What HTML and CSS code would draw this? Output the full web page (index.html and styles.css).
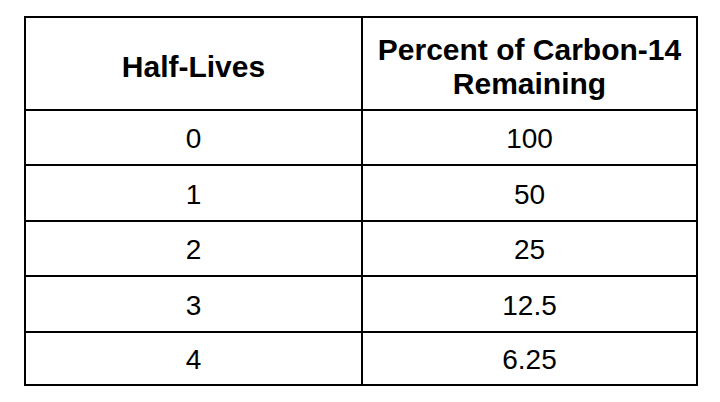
FILE: index.html
```html
<!DOCTYPE html>
<html>
<head>
<meta charset="utf-8">
<link rel="stylesheet" href="styles.css">
</head>
<body>
<table class="decay">
  <thead>
    <tr>
      <th class="col-a">Half-Lives</th>
      <th class="col-b">Percent of Carbon-14<br>Remaining</th>
    </tr>
  </thead>
  <tbody>
    <tr class="short"><td class="col-a">0</td><td class="col-b">100</td></tr>
    <tr><td class="col-a">1</td><td class="col-b">50</td></tr>
    <tr class="short"><td class="col-a">2</td><td class="col-b">25</td></tr>
    <tr><td class="col-a">3</td><td class="col-b">12.5</td></tr>
    <tr class="last"><td class="col-a">4</td><td class="col-b">6.25</td></tr>
  </tbody>
</table>
</body>
</html>
```

FILE: styles.css
```css
html, body {
  margin: 0;
  padding: 0;
  background: #ffffff;
}

body {
  font-family: "Liberation Sans", Arial, sans-serif;
  color: #000000;
}

.decay {
  margin: 16px 0 0 24px;
  border-collapse: separate;
  border-spacing: 0;
  border: 2px solid #000000;
  table-layout: fixed;
  width: 674px;
}

.decay th,
.decay td {
  box-sizing: border-box;
  padding: 0;
  text-align: center;
  vertical-align: middle;
  border-bottom: 2px solid #000000;
}

.decay tr.last td {
  border-bottom: none;
}

.decay .col-a {
  width: 337px;
  border-right: 2px solid #000000;
}

.decay .col-b {
  width: 333px;
}

.decay th {
  height: 93px;
  padding-top: 6px;
  font-size: 30px;
  line-height: 34px;
  font-weight: bold;
}

.decay td {
  height: 56px;
  padding-top: 3px;
  font-size: 28px;
  line-height: 32px;
  font-weight: normal;
}

.decay tr.short td {
  height: 55px;
}

.decay tr.last td {
  height: 51px;
}
```
